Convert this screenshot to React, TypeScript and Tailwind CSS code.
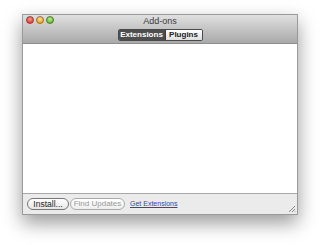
import React from "react"

function Light({ from, to, border }: { from: string; to: string; border: string }) {
  return (
    <span
      className="block w-[8px] h-[8px] rounded-full"
      style={{ background: `radial-gradient(circle at 50% 35%, ${from}, ${to})`, border: `1px solid ${border}` }}
    />
  )
}

export default function App() {
  return (
    <div className="w-[320px] h-[245px] bg-white pt-[14px] pl-[22px] overflow-hidden whitespace-nowrap" style={{ fontFamily: '"Liberation Sans", Arial, sans-serif' }}>
      <div className="w-[276px] h-[201px] flex flex-col shadow-[0_8px_18px_rgba(0,0,0,0.4)] border border-[#9a9a9a]">
        {/* title bar */}
        <div className="h-[29px] flex flex-col items-center bg-gradient-to-b from-[#e0e0e0] to-[#a9a9a9] border-b border-[#8f8f8f] relative">
          <div className="absolute left-[3px] top-[1px] flex gap-[2px]">
            <Light from="#ff9a90" to="#d11f1f" border="#9e3b33" />
            <Light from="#ffe08a" to="#e0920f" border="#a0702a" />
            <Light from="#b8ef8a" to="#52a724" border="#4b7a2e" />
          </div>
          <div className="text-[9px] leading-none text-[#3c3c3c] mt-[2px]">Add-ons</div>
          <div className="mt-[3px] flex border border-[#4a4a4a] rounded-[2px] overflow-hidden h-[12px]">
            <div className="w-[47px] bg-[#4e4e4e] text-white text-[8px] font-bold flex items-center justify-center border-r border-[#3a3a3a]">Extensions</div>
            <div className="w-[36px] bg-gradient-to-b from-white to-[#dedede] text-[#222] text-[8px] font-bold flex items-center justify-center">Plugins</div>
          </div>
        </div>
        {/* content */}
        <div className="flex-1 bg-white" />
        {/* bottom bar */}
        <div className="h-[21px] bg-[#ebebeb] border-t border-[#a8a8a8] flex items-center pl-[4px] gap-[1px] relative">
          <div className="h-[12px] w-[42px] rounded-full border border-[#777] bg-gradient-to-b from-white to-[#e6e6e6] text-[8.5px] text-[#222] flex items-center justify-center">Install...</div>
          <div className="h-[12px] w-[55px] rounded-full border border-[#aaa] bg-gradient-to-b from-white to-[#eeeeee] text-[8px] text-[#999] flex items-center justify-center">Find Updates</div>
          <span className="ml-[4px] text-[7px] text-[#2a45c0] underline">Get Extensions</span>
          <svg className="absolute right-[1px] bottom-[1px]" width="8" height="8" viewBox="0 0 8 8">
            <path d="M7 1L1 7M7 4L4 7M7 6.5L6.5 7" stroke="#888" strokeWidth="1" />
          </svg>
        </div>
      </div>
    </div>
  )
}
